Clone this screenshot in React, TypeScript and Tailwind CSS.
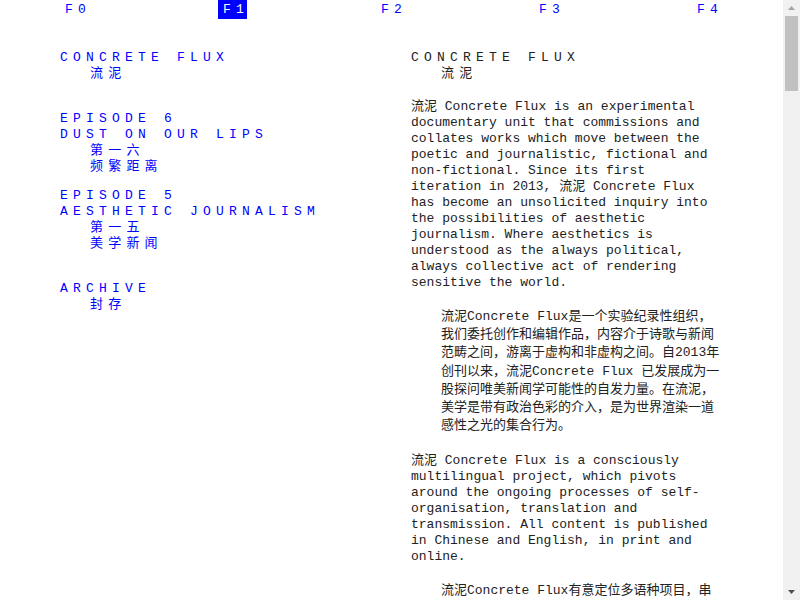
const tabs = ['F0', 'F1', 'F2', 'F3', 'F4'];

export default function App() {
  return (
    <div className="flex h-[600px] overflow-hidden bg-white font-['Liberation_Mono','Noto_Sans_CJK_SC',monospace] text-[13px]">
      <div className="flex-1 overflow-hidden">
        {/* top nav */}
        <nav className="grid grid-cols-[repeat(4,158px)_auto] pl-[60px] h-[19px] leading-[19px] tracking-[0.4em] text-[#0000ff]">
          {tabs.map((t, i) => (
            <div key={t}>
              <span className={i === 1 ? 'inline-block w-[29px] pl-[5px] whitespace-nowrap bg-[#0000ff] text-white' : 'inline-block w-[29px] pl-[5px] whitespace-nowrap'}>
                {t}
              </span>
            </div>
          ))}
        </nav>

        <div className="flex pt-[31px]">
          {/* index column */}
          <div className="w-[411px] shrink-0 pl-[60px] text-[#0000ff] tracking-[0.4em] leading-4">
            <div className="mb-[29px]">
              <div>CONCRETE FLUX</div>
              <div className="pl-[30px]">流泥</div>
            </div>
            <div className="mb-[13px]">
              <div>EPISODE 6</div>
              <div>DUST ON OUR LIPS</div>
              <div className="pl-[30px]">第一六</div>
              <div className="pl-[30px]">频繁距离</div>
            </div>
            <div className="mb-[29px]">
              <div>EPISODE 5</div>
              <div>AESTHETIC JOURNALISM</div>
              <div className="pl-[30px]">第一五</div>
              <div className="pl-[30px]">美学新闻</div>
            </div>
            <div>
              <div>ARCHIVE</div>
              <div className="pl-[30px]">封存</div>
            </div>
          </div>

          {/* about text */}
          <div className="w-[310px] shrink-0 text-[#222] leading-4">
            <div className="tracking-[0.4em] mb-[17px]">
              <div>CONCRETE FLUX</div>
              <div className="pl-[30px]">流泥</div>
            </div>
            <p className="mb-[17px]">
              流泥 Concrete Flux is an experimental documentary unit that commissions and collates works which move between the poetic and journalistic, fictional and non-fictional. Since its first iteration in 2013, 流泥 Concrete Flux has become an unsolicited inquiry into the possibilities of aesthetic journalism. Where aesthetics is understood as the always political, always collective act of rendering sensitive the world.
            </p>
            <p className="pl-[30px] leading-[18.2px] mb-[18px]">
              流泥Concrete Flux是一个实验纪录性组织，我们委托创作和编辑作品，内容介于诗歌与新闻范畴之间，游离于虚构和非虚构之间。自2013年创刊以来，流泥Concrete Flux 已发展成为一股探问唯美新闻学可能性的自发力量。在流泥，美学是带有政治色彩的介入，是为世界渲染一道感性之光的集合行为。
            </p>
            <p className="mb-[17px]">
              流泥 Concrete Flux is a consciously multilingual project, which pivots around the ongoing processes of self-organisation, translation and transmission. All content is published in Chinese and English, in print and online.
            </p>
            <p className="pl-[30px] leading-[18.2px] mb-[18px]">
              流泥Concrete Flux有意定位多语种项目，串联起自我组织、翻译和传播的持续进程。所有内容均以中文和英文出版，包括印刷版和网络版。
            </p>
          </div>
        </div>
      </div>

      {/* scrollbar */}
      <div className="w-[17px] shrink-0 bg-[#f1f1f1] flex flex-col items-center">
        <svg width="17" height="15" viewBox="0 0 17 15" className="shrink-0">
          <path d="M5 10 L8.5 6 L12 10 Z" fill="#a3a3a3" />
        </svg>
        <div className="w-[13px] h-[75px] mt-[1px] bg-[#c1c1c1]" />
        <div className="flex-1" />
        <svg width="17" height="15" viewBox="0 0 17 15" className="shrink-0">
          <path d="M5 5 L12 5 L8.5 9 Z" fill="#505050" />
        </svg>
      </div>
    </div>
  );
}
